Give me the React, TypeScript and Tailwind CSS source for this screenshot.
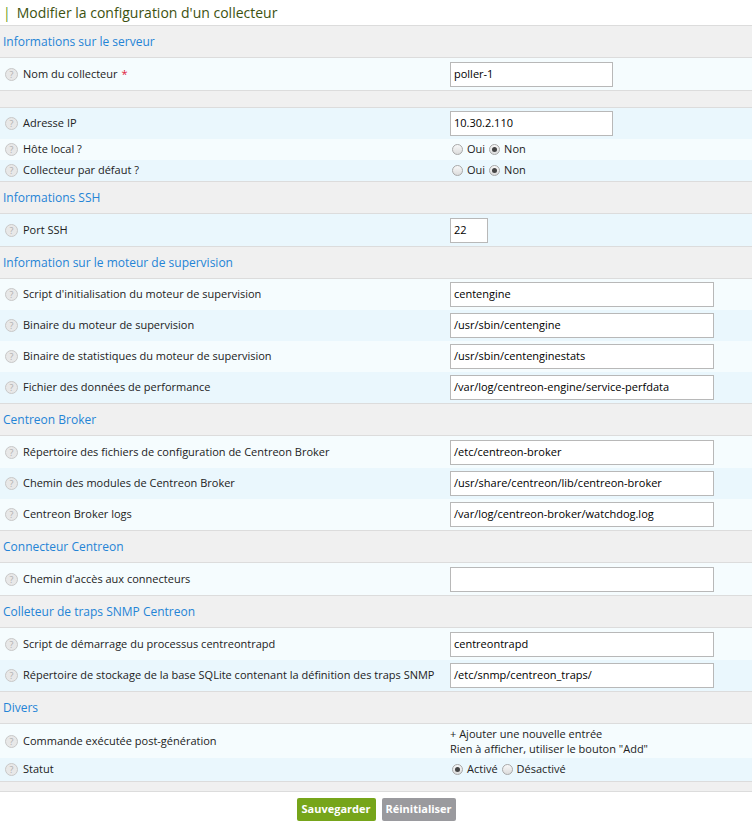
import React from "react";

const L = "bg-[#f5fcfe]";
const D = "bg-[#eaf7fd]";

function Q() {
  return (
    <span className="mr-[5px] inline-flex h-[13px] w-[13px] items-center justify-center rounded-full border border-[#c8c8c8] bg-[#e8e8e8] text-[9px] leading-none text-[#b0b0b0]">?</span>
  );
}

function Header({ t }: { t: string }) {
  return (
    <div className="flex h-[33px] items-center border-y border-[#dcdcdc] bg-[#f0f0f0] px-[3px] text-[12px] text-[#2484d6]">{t}</div>
  );
}

function Row({ label, bg, h = 31, children, star }: { label: string; bg: string; h?: number; children?: React.ReactNode; star?: boolean }) {
  return (
    <div className={`flex items-center ${bg}`} style={{ height: h }}>
      <div className="flex w-[450px] items-center pl-[5px] text-[11px] text-[#222]">
        <Q />
        {label}
        {star && <span className="ml-1 text-[#e0203a]">*</span>}
      </div>
      <div className="flex-1 text-[11px] text-[#222]">{children}</div>
    </div>
  );
}

function Input({ v, w = 264 }: { v: string; w?: number }) {
  return (
    <div className="flex h-[25px] items-center border border-[#b8b8b8] bg-white px-[3px] text-[11px] text-black" style={{ width: w }}>{v}</div>
  );
}

function Radio({ on }: { on?: boolean }) {
  return (
    <span className="mx-[2px] inline-flex h-[11px] w-[11px] items-center justify-center rounded-full border border-[#a8a8a8] bg-gradient-to-b from-[#f8f8f8] to-[#dcdcdc] align-middle">
      {on && <span className="h-[5px] w-[5px] rounded-full bg-[#444]" />}
    </span>
  );
}

function Radios({ a, b, second = true }: { a: string; b: string; second?: boolean }) {
  return (
    <div className="flex items-center gap-[2px]">
      <Radio on={!second} /> {a} <Radio on={second} /> {b}
    </div>
  );
}

export default function App() {
  return (
    <div className="w-[752px] bg-white" style={{ fontFamily: '"Open Sans", sans-serif' }}>
      <div className="flex h-[25px] items-center px-[3px] text-[14px] text-[#3d5210]">
        <span className="mr-[6px] text-[#6a9a1a]">|</span>Modifier la configuration d'un collecteur
      </div>
      <Header t="Informations sur le serveur" />
      <Row label="Nom du collecteur" bg={L} h={32} star><Input v="poller-1" w={163} /></Row>
      <div className="h-[18px] border-y border-[#dcdcdc] bg-[#f0f0f0]" />
      <Row label="Adresse IP" bg={D}><Input v="10.30.2.110" w={163} /></Row>
      <Row label="Hôte local ?" bg={L} h={21}><Radios a="Oui" b="Non" /></Row>
      <Row label="Collecteur par défaut ?" bg={D} h={21}><Radios a="Oui" b="Non" /></Row>
      <Header t="Informations SSH" />
      <Row label="Port SSH" bg={D} h={32}><Input v="22" w={38} /></Row>
      <Header t="Information sur le moteur de supervision" />
      <Row label="Script d'initialisation du moteur de supervision" bg={L}><Input v="centengine" /></Row>
      <Row label="Binaire du moteur de supervision" bg={D}><Input v="/usr/sbin/centengine" /></Row>
      <Row label="Binaire de statistiques du moteur de supervision" bg={L}><Input v="/usr/sbin/centenginestats" /></Row>
      <Row label="Fichier des données de performance" bg={D}><Input v="/var/log/centreon-engine/service-perfdata" /></Row>
      <Header t="Centreon Broker" />
      <Row label="Répertoire des fichiers de configuration de Centreon Broker" bg={L} h={32}><Input v="/etc/centreon-broker" /></Row>
      <Row label="Chemin des modules de Centreon Broker" bg={D}><Input v="/usr/share/centreon/lib/centreon-broker" /></Row>
      <Row label="Centreon Broker logs" bg={L}><Input v="/var/log/centreon-broker/watchdog.log" /></Row>
      <Header t="Connecteur Centreon" />
      <Row label="Chemin d'accès aux connecteurs" bg={L} h={32}><Input v="" /></Row>
      <Header t="Colleteur de traps SNMP Centreon" />
      <Row label="Script de démarrage du processus centreontrapd" bg={L} h={32}><Input v="centreontrapd" /></Row>
      <Row label="Répertoire de stockage de la base SQLite contenant la définition des traps SNMP" bg={D} h={31}><Input v="/etc/snmp/centreon_traps/" /></Row>
      <Header t="Divers" />
      <Row label="Commande exécutée post-génération" bg={L} h={34}>
        <div className="leading-[15px]">+ Ajouter une nouvelle entrée<br />Rien à afficher, utiliser le bouton "Add"</div>
      </Row>
      <Row label="Statut" bg={D} h={23}><Radios a="Activé" b="Désactivé" second={false} /></Row>
      <div className="h-[11px] border-y border-[#dcdcdc] bg-[#f0f0f0]" />
      <div className="flex h-[34px] items-center justify-center gap-[6px]">
        <button className="h-[23px] w-[79px] rounded-[2px] bg-[#76a51a] text-[11px] font-bold text-white">Sauvegarder</button>
        <button className="h-[23px] w-[74px] rounded-[2px] bg-[#9a9a9e] text-[11px] font-bold text-white">Réinitialiser</button>
      </div>
    </div>
  );
}
